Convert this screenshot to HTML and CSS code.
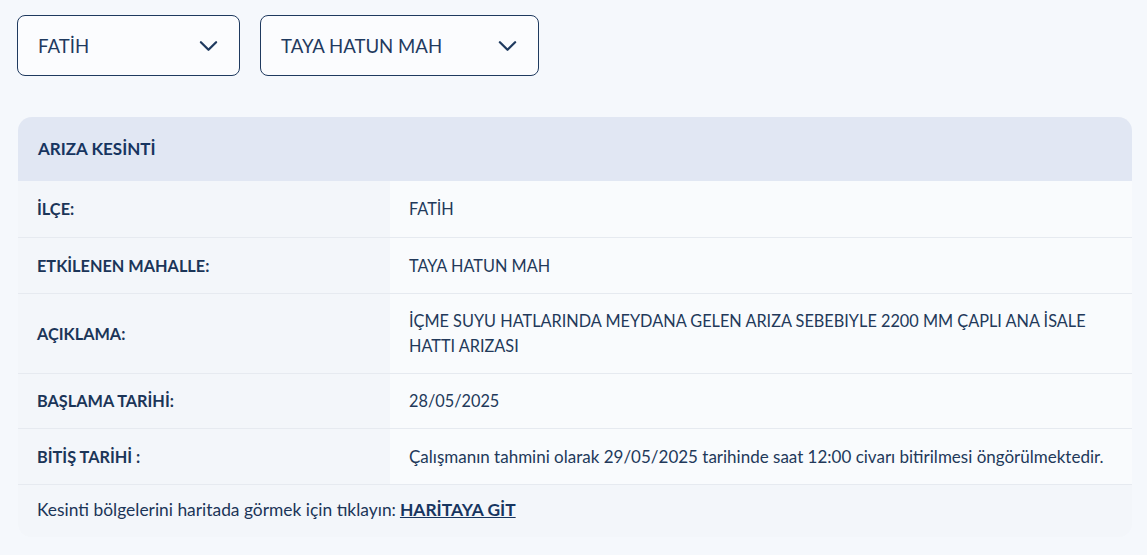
FILE: index.html
```html
<!DOCTYPE html>
<html lang="tr">
<head>
  <meta charset="UTF-8" />
  <meta name="viewport" content="width=device-width, initial-scale=1.0"/>
  <title>Arıza Kesinti</title>
  <link rel="stylesheet" href="styles.css">
</head>
<body>

  <div class="filters">
    <div class="select select-district">
      <span>FATİH</span>
      <svg class="chevron" viewBox="0 0 20 12" width="19" height="12"><path d="M2 2l8 8 8-8" fill="none" stroke="currentColor" stroke-width="2.4" stroke-linecap="round" stroke-linejoin="round"/></svg>
    </div>
    <div class="select select-street">
      <span>TAYA HATUN MAH</span>
      <svg class="chevron" viewBox="0 0 20 12" width="19" height="12"><path d="M2 2l8 8 8-8" fill="none" stroke="currentColor" stroke-width="2.4" stroke-linecap="round" stroke-linejoin="round"/></svg>
    </div>
  </div>

  <div class="card">
    <div class="card-head">ARIZA KESİNTİ</div>
    <table class="info">
      <tr>
        <th>İLÇE:</th>
        <td>FATİH</td>
      </tr>
      <tr>
        <th>ETKİLENEN MAHALLE:</th>
        <td>TAYA HATUN MAH</td>
      </tr>
      <tr class="tall">
        <th>AÇIKLAMA:</th>
        <td>İÇME SUYU HATLARINDA MEYDANA GELEN ARIZA SEBEBIYLE 2200 MM ÇAPLI ANA İSALE HATTI ARIZASI</td>
      </tr>
      <tr class="short">
        <th>BAŞLAMA TARİHİ:</th>
        <td>28/05/2025</td>
      </tr>
      <tr>
        <th>BİTİŞ TARİHİ :</th>
        <td class="sentence">Çalışmanın tahmini olarak 29/05/2025 tarihinde saat 12:00 civarı bitirilmesi öngörülmektedir.</td>
      </tr>
    </table>
    <div class="card-foot">
      Kesinti bölgelerini haritada görmek için tıklayın: <a href="#">HARİTAYA GİT</a>
    </div>
  </div>

</body>
</html>
```

FILE: styles.css
```css
* {
  box-sizing: border-box;
}

body {
  margin: 0;
  padding: 15px 15px 0 17px;
  background: #f5f8fc;
  font-family: Lato, 'Noto Sans', sans-serif;
  color: #1b3558;
}

.filters {
  display: flex;
  gap: 20px;
}

.select {
  height: 61px;
  display: flex;
  align-items: center;
  justify-content: space-between;
  padding: 0 21px 0 20px;
  border: 1px solid #1f3a5f;
  border-radius: 8px;
  background: #fbfcfe;
  font-size: 18.6px;
  color: #1f3a5f;
}

.select-district {
  width: 223px;
}

.select-street {
  width: 279px;
}

.chevron {
  display: block;
}

.card {
  margin-top: 41px;
  margin-left: 1px;
  width: 1114px;
  border-radius: 14px;
  overflow: hidden;
  background: #f3f6fa;
}

.card-head {
  height: 64px;
  display: flex;
  align-items: center;
  padding: 0 20px 2px;
  background: #e1e7f3;
  font-size: 17px;
  font-weight: 700;
  color: #173560;
}

.info {
  width: 100%;
  border-collapse: collapse;
  font-size: 16.3px;
}

.info tr {
  height: 56px;
}

.info tr.tall {
  height: 80px;
}

.info tr.short {
  height: 55px;
}

.info th,
.info td {
  padding: 0 19px;
  text-align: left;
  vertical-align: middle;
  border-bottom: 1px solid #e6eaf0;
  line-height: 25px;
}

.info th {
  width: 372px;
  font-weight: 700;
  background: #f3f6fa;
  color: #1b3558;
}

.info td {
  background: #f9fbfd;
  color: #22395a;
}

.info td.sentence {
  font-size: 17px;
}

.card-foot {
  height: 52px;
  display: flex;
  align-items: center;
  padding: 0 19px 2px;
  font-size: 17.4px;
  background: #f3f6fa;
}

.card-foot a {
  margin-left: 4px;
  font-weight: 700;
  color: #173560;
}
```
